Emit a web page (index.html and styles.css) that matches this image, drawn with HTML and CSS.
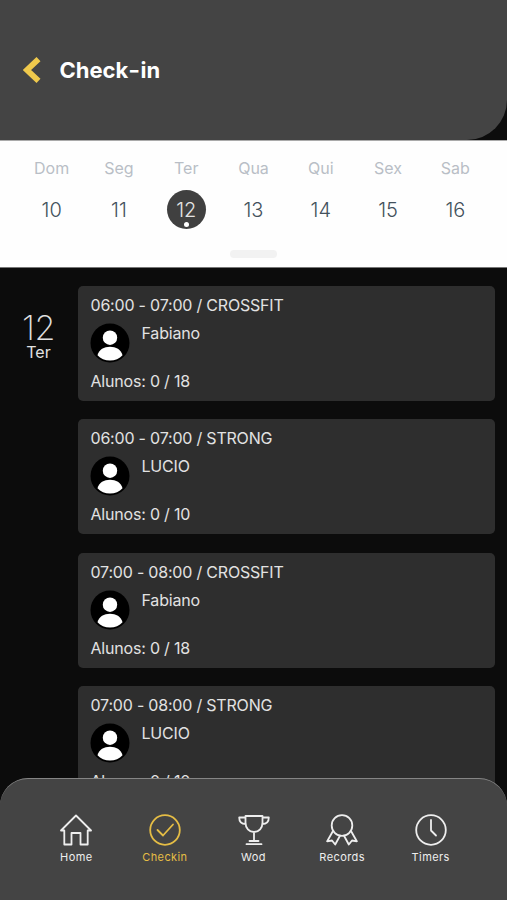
FILE: index.html
```html
<!DOCTYPE html>
<html lang="pt-BR">
<head>
    <meta charset="UTF-8">
    <meta name="viewport" content="width=device-width, initial-scale=1.0">
    <title>Check-in</title>
    <link rel="stylesheet" href="styles.css">
</head>
<body>
    <!-- avatar shared by all the classes -->
    <svg class="sprite" width="0" height="0">
        <symbol id="avatar" viewBox="0 0 40 40">
            <circle cx="20" cy="20" r="19.5" fill="#000"/>
            <circle cx="20" cy="14.7" r="7.2" fill="#fff"/>
            <path d="M7.5 32.3C9 26.5 14 23.8 20 23.8s11 2.7 12.5 8.5C29.5 35.9 25 37.6 20 37.6S10.5 35.9 7.5 32.3z" fill="#fff"/>
        </symbol>
    </svg>

    <header class="header">
        <svg class="back" width="18" height="28" viewBox="0 0 18 28">
            <path d="M15.5 3.2L4 14l11.5 10.8" fill="none" stroke="#efc94c" stroke-width="5.8"/>
        </svg>
        <h1 class="title">Check<span class="dash">-</span>in</h1>
    </header>

    <section class="calendar">
        <div class="week">
            <div class="day"><span class="day-name">Dom</span><span class="day-number">10</span></div>
            <div class="day"><span class="day-name">Seg</span><span class="day-number">11</span></div>
            <div class="day selected"><span class="day-name">Ter</span><span class="day-number">12</span></div>
            <div class="day"><span class="day-name">Qua</span><span class="day-number">13</span></div>
            <div class="day"><span class="day-name">Qui</span><span class="day-number">14</span></div>
            <div class="day"><span class="day-name">Sex</span><span class="day-number">15</span></div>
            <div class="day"><span class="day-name">Sab</span><span class="day-number">16</span></div>
        </div>
        <div class="knob"></div>
    </section>

    <main class="schedule">
        <div class="date">
            <div class="date-number">12</div>
            <div class="date-name">Ter</div>
        </div>
        <div class="classes">
            <article class="card">
                <p class="hour">06:00 - 07:00 / CROSSFIT</p>
                <div class="coach">
                    <svg class="avatar"><use href="#avatar"/></svg>
                    <span class="coach-name">Fabiano</span>
                </div>
                <p class="students">Alunos: 0 / 18</p>
            </article>
            <article class="card">
                <p class="hour">06:00 - 07:00 / STRONG</p>
                <div class="coach">
                    <svg class="avatar"><use href="#avatar"/></svg>
                    <span class="coach-name">LUCIO</span>
                </div>
                <p class="students">Alunos: 0 / 10</p>
            </article>
            <article class="card">
                <p class="hour">07:00 - 08:00 / CROSSFIT</p>
                <div class="coach">
                    <svg class="avatar"><use href="#avatar"/></svg>
                    <span class="coach-name">Fabiano</span>
                </div>
                <p class="students">Alunos: 0 / 18</p>
            </article>
            <article class="card">
                <p class="hour">07:00 - 08:00 / STRONG</p>
                <div class="coach">
                    <svg class="avatar"><use href="#avatar"/></svg>
                    <span class="coach-name">LUCIO</span>
                </div>
                <p class="students">Alunos: 0 / 10</p>
            </article>
        </div>
    </main>

    <nav class="tabbar">
        <a class="tab">
            <svg class="icon" viewBox="0 0 32 32">
                <path d="M1 16.5L16 1.5l15 15h-3.3v14h-7.200V19h-9v11.500H4.300v-14z"/>
            </svg>
            <span>Home</span>
        </a>
        <a class="tab active">
            <svg class="icon" viewBox="0 0 32 32">
                <circle cx="16" cy="16" r="14.8"/>
                <path d="M8.5 16l5.500 5.500L24 10.500"/>
            </svg>
            <span>Checkin</span>
        </a>
        <a class="tab">
            <svg class="icon" viewBox="0 0 32 32">
                <path d="M7.5 2h17v6.5c0 5.5-3.5 9.5-8.5 9.5s-8.500-4-8.500-9.500zM7.500 3.500H1.200c0 4.500 2 6.500 6.600 6.500M24.500 3.500h6.300c0 4.500-2 6.500-6.600 6.500M16 18v9M11.500 27h9M8.500 30.200h15"/>
            </svg>
            <span>Wod</span>
        </a>
        <a class="tab">
            <svg class="icon" viewBox="0 0 32 32">
                <circle cx="16" cy="11.5" r="10.3"/>
                <path d="M7 17L1.2 27.300l4.800-.8 3.200 4L14 21.700M25 17l5.800 10.300-4.800-.8-3.200 4L18 21.700"/>
            </svg>
            <span>Records</span>
        </a>
        <a class="tab">
            <svg class="icon" viewBox="0 0 32 32">
                <circle cx="16" cy="16" r="14.8"/>
                <path d="M16 6v10.5l5 5"/>
            </svg>
            <span>Timers</span>
        </a>
    </nav>
</body>
</html>
```
FILE: styles.css
```css
* {
    margin: 0;
    padding: 0;
    box-sizing: border-box;
}

body {
    height: 100vh;
    overflow: hidden;
    background: #0c0c0c;
    color: #e2e2e2;
    font-family: Inter, "Liberation Sans", sans-serif;
}

.sprite {
    display: block;
}

/* header */
.header {
    height: 140px;
    display: flex;
    align-items: center;
    gap: 19px;
    padding-left: 22.5px;
    background: #444;
    border-bottom-right-radius: 40px;
}

.back {
    display: block;
}

.title {
    color: #fff;
    font-size: 22px;
    font-weight: 700;
    line-height: 30px;
}

.dash {
    display: inline-block;
    margin: 0 1px;
    transform: scaleX(1.15);
}

/* week calendar */
.calendar {
    height: 128px;
    padding: 17px 18px 0;
    background: #fefefe;
    border-top: 1px solid #aaa;
    border-bottom: 1px solid #777;
}

.week {
    display: grid;
    grid-template-columns: repeat(7, 1fr);
}

.day {
    display: flex;
    flex-direction: column;
    align-items: center;
    gap: 11px;
}

.day-name {
    color: #b9bec6;
    font-size: 16px;
    line-height: 21px;
}

.day-number {
    width: 39px;
    height: 39px;
    color: #43515c;
    font-size: 20px;
    font-weight: 300;
    line-height: 40px;
    text-align: center;
}

.selected .day-number {
    position: relative;
    border-radius: 50%;
    background: #404040;
    color: #e4e4e4;
}

.selected .day-number::after {
    content: "";
    position: absolute;
    left: 17px;
    bottom: 2px;
    width: 5px;
    height: 5px;
    border-radius: 50%;
    background: #fff;
}

.knob {
    width: 47px;
    height: 8px;
    margin: 21px auto 0;
    border-radius: 4px;
    background: #f2f2f2;
}

/* classes of the day */
.schedule {
    display: flex;
    padding: 18.2px 12px 0 0;
}

.date {
    width: 77px;
    margin-right: 1px;
    padding-top: 28px;
    text-align: center;
}

.date-number {
    font-size: 34px;
    font-weight: 200;
    line-height: 28px;
    letter-spacing: -0.5px;
}

.date-name {
    font-size: 16px;
    line-height: 20px;
}

.classes {
    flex: 1;
    display: flex;
    flex-direction: column;
    gap: 18.3px;
}

.card {
    height: 115px;
    padding: 9px 12.5px;
    border-radius: 5px;
    background: #2e2e2e;
    font-size: 16px;
    line-height: 20px;
    letter-spacing: -0.2px;
}

.coach {
    display: flex;
    gap: 12px;
    margin: 8px 0 8px -1px;
}

.avatar {
    width: 40px;
    height: 40px;
}

/* bottom navigation */
.tabbar {
    position: fixed;
    left: 0;
    right: 0;
    bottom: 0;
    height: 122px;
    display: flex;
    justify-content: center;
    padding: 35px 32px 0;
    border-top: 1px solid #858585;
    border-radius: 28px 28px 0 0;
    background: #444;
}

.tab {
    flex: 1;
    display: flex;
    flex-direction: column;
    align-items: center;
    gap: 3px;
    color: #eee;
    font-size: 11px;
    line-height: 16px;
    letter-spacing: 0.4px;
}

.icon {
    width: 32px;
    height: 32px;
    fill: none;
    stroke: currentColor;
    stroke-width: 1.8;
    stroke-linejoin: round;
    stroke-linecap: round;
}

.active {
    color: #e5bd45;
}
```
